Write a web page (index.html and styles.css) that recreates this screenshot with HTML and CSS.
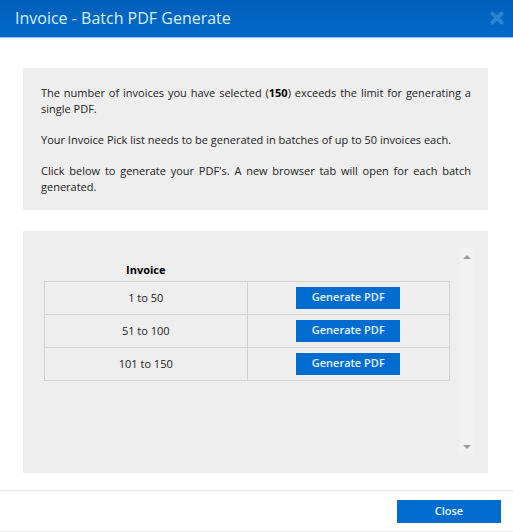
FILE: index.html
```html
<!DOCTYPE html>
<html lang="en">
<head>
    <meta charset="UTF-8">
    <meta name="viewport" content="width=device-width, initial-scale=1.0">
    <title>Invoice - Batch PDF Generate</title>
    <link rel="stylesheet" href="styles.css">
</head>
<body>
    <div class="modal" role="dialog" aria-labelledby="modal_title">
        <header class="modal-header">
            <h1 id="modal_title">Invoice - Batch PDF Generate</h1>
            <button class="dismiss" type="button" aria-label="Dismiss">
                <svg width="14" height="14" viewBox="0 0 14 14">
                    <path d="M2.5 2.5 L11.5 11.5 M11.5 2.5 L2.5 11.5" fill="none" stroke="currentColor" stroke-width="4" stroke-linecap="round"/>
                </svg>
            </button>
        </header>

        <main class="modal-body">
            <section class="panel message">
                <p>The number of invoices you have selected (<strong>150</strong>) exceeds the limit for generating a single PDF.</p>
                <p>Your Invoice Pick list needs to be generated in batches of up to 50 invoices each.</p>
                <p>Click below to generate your PDF's. A new browser tab will open for each batch generated.</p>
            </section>

            <section class="panel batches">
                <table class="batch-table">
                    <thead>
                        <tr>
                            <th scope="col">Invoice</th>
                            <td></td>
                        </tr>
                    </thead>
                    <tbody>
                        <tr>
                            <td>1 to 50</td>
                            <td><button class="btn" type="button">Generate PDF</button></td>
                        </tr>
                        <tr>
                            <td>51 to 100</td>
                            <td><button class="btn" type="button">Generate PDF</button></td>
                        </tr>
                        <tr>
                            <td>101 to 150</td>
                            <td><button class="btn" type="button">Generate PDF</button></td>
                        </tr>
                    </tbody>
                </table>

                <div class="scroll-track">
                    <svg width="8" height="4" viewBox="0 0 8 4"><path d="M4 0 L8 4 H0 Z" fill="currentColor"/></svg>
                    <svg width="8" height="4" viewBox="0 0 8 4"><path d="M0 0 H8 L4 4 Z" fill="currentColor"/></svg>
                </div>
            </section>
        </main>

        <footer class="modal-footer">
            <button class="btn btn-close" type="button">Close</button>
        </footer>
    </div>
</body>
</html>
```

FILE: styles.css
```css
* {
    box-sizing: border-box;
}

body {
    margin: 0;
    background-color: #fff;
    color: #222;
    font-family: "Open Sans", "Noto Sans", sans-serif;
    font-size: 11px;
    line-height: 16px;
}

.modal {
    border-bottom: 1px solid #eee;
}

.modal-header {
    display: flex;
    align-items: center;
    justify-content: space-between;
    height: 38px;
    padding: 0 9px 2px 15px;
    background: linear-gradient(#0060b8, #0069cb);
    border-bottom: 1px solid #8cc4f2;
    color: #d9f1ff;
}

.modal-header h1 {
    margin: 0;
    font-size: 16px;
    font-weight: normal;
    line-height: 24px;
}

.dismiss {
    display: flex;
    padding: 0;
    border: none;
    background: none;
    color: #2b84d0;
    cursor: pointer;
}

.modal-body {
    display: flex;
    flex-direction: column;
    gap: 21px;
    padding: 30px 25px 17px 23px;
}

.panel {
    background-color: #eee;
}

.message {
    padding: 17px 17px 15px 18px;
    text-align: justify;
}

.message p {
    margin: 0 0 15px;
}

.message p:last-child {
    margin-bottom: 0;
}

strong {
    color: #000;
}

.batches {
    display: flex;
    align-items: flex-start;
    justify-content: space-between;
    gap: 9px;
    padding: 17px 14px 18px 21px;
}

.batch-table {
    flex: 1;
    margin-top: 12px;
    border-collapse: collapse;
    table-layout: fixed;
    text-align: center;
}

.batch-table th,
.batch-table td {
    width: 50%;
    padding: 0;
}

.batch-table thead tr {
    height: 21px;
}

.batch-table th {
    color: #000;
    font-weight: bold;
}

.batch-table tbody tr {
    height: 33px;
}

.batch-table tbody td {
    border: 1px solid #d2d2d2;
}

.btn {
    width: 104px;
    height: 22px;
    padding: 0 0 2px;
    border: none;
    background-color: #006ccf;
    color: #e6f6ff;
    font-family: inherit;
    font-size: 11px;
    font-weight: 600;
    line-height: 20px;
    vertical-align: middle;
    cursor: pointer;
}

.btn:hover {
    background-color: #005bb0;
}

.scroll-track {
    display: flex;
    flex-direction: column;
    align-items: center;
    justify-content: space-between;
    width: 15px;
    height: 207px;
    padding: 7px 0 6px;
    background-color: #f1f1f1;
    color: #a0a0a0;
}

.modal-footer {
    display: flex;
    justify-content: flex-end;
    padding: 9px 12px 8px;
    border-top: 1px solid #e8e8e8;
}

.btn-close {
    height: 23px;
}
```
